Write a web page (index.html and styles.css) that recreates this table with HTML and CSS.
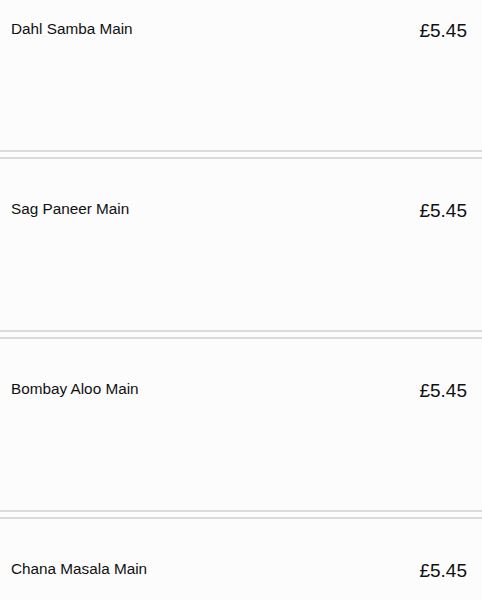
FILE: index.html
```html
<!DOCTYPE html>
<html lang="en">
  <head>
    <meta charset="UTF-8" />
    <meta name="viewport" content="width=device-width, initial-scale=1.0" />
    <title>Menu</title>
    <link rel="stylesheet" href="styles.css">
  </head>
  <body>
    <!-- 메뉴 목록 -->
    <div class="menu-list">
      <div class="menu-item">
        <span class="item-name">Dahl Samba Main</span>
        <span class="item-price">£5.45</span>
      </div>
      <div class="menu-item">
        <span class="item-name">Sag Paneer Main</span>
        <span class="item-price">£5.45</span>
      </div>
      <div class="menu-item">
        <span class="item-name">Bombay Aloo Main</span>
        <span class="item-price">£5.45</span>
      </div>
      <div class="menu-item">
        <span class="item-name">Chana Masala Main</span>
        <span class="item-price">£5.45</span>
      </div>
    </div>
  </body>
</html>
```
FILE: styles.css
```css
* {
  font-family: "Liberation Sans", Arial, sans-serif;
  padding: 0;
  margin: 0;
  box-sizing: border-box;
}

body {
  background-color: #fcfcfc;
  color: #111;
}

/* 첫 카드는 위쪽이 잘려 보임 */
.menu-list {
  margin-top: -23px;
}

.menu-item {
  display: flex;
  justify-content: space-between;
  align-items: flex-start;
  height: 175px;
  padding: 41px 15px 0 11px;
  margin-bottom: 5px;
  border-top: 2px solid #dadada;
  border-bottom: 2px solid #dadada;
}

.item-name {
  font-size: 15.3px;
  line-height: 18px;
}

.item-price {
  font-size: 19px;
  line-height: 22px;
}
```
